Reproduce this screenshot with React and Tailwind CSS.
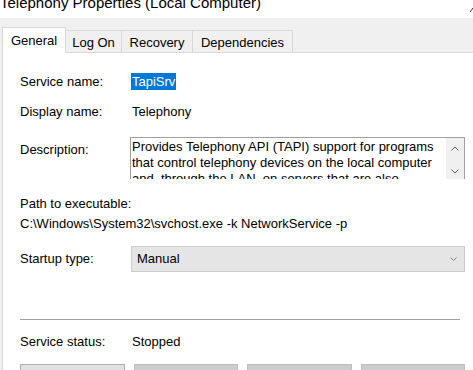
import React from "react";

export default function App() {
  const tabs = [
    { label: "General", w: "w-[64px]", sel: true },
    { label: "Log On", w: "w-[57px]" },
    { label: "Recovery", w: "w-[72px]" },
    { label: "Dependencies", w: "w-[101px]" },
  ];
  return (
    <div className="w-[473px] h-[370px] overflow-hidden bg-[#f0f0f0] flex flex-col font-['Liberation_Sans',Arial,sans-serif] text-[13px] text-black">
      {/* title bar */}
      <div className="h-[18px] bg-white overflow-hidden flex justify-between shrink-0">
        <div className="-mt-[5px] leading-[15px] text-[15px] whitespace-nowrap">
          Telephony Properties (Local Computer)
        </div>
        <svg width="4" height="14" viewBox="0 0 4 14" className="shrink-0">
          <line x1="1" y1="12" x2="4" y2="8" stroke="#333" strokeWidth="1" />
        </svg>
      </div>
      {/* tabs */}
      <div className="flex items-start pt-[9px] pl-[2px] shrink-0">
        {tabs.map((t) =>
          t.sel ? (
            <div
              key={t.label}
              className={`${t.w} h-[26px] relative z-10 bg-white border-l border-t border-r border-[#d9d9d9] flex justify-center pt-[5px] leading-[16px]`}
            >
              {t.label}
            </div>
          ) : (
            <div
              key={t.label}
              className={`${t.w} h-[22px] mt-[3px] -ml-[1px] border border-b-0 border-[#d9d9d9] flex justify-center pt-[4px] leading-[16px]`}
            >
              {t.label}
            </div>
          )
        )}
      </div>
      {/* panel */}
      <div className="-mt-[1px] ml-[2px] w-[480px] flex-1 bg-white border-l border-t border-[#d9d9d9] pl-[17px] pt-[20px] leading-[16px]">
        <div className="flex h-[17px] items-center">
          <div className="w-[112px]">Service name:</div>
          <span className="-ml-[1px] px-[1px] h-[17px] leading-[17px] bg-[#0078d7] text-white">TapiSrv</span>
        </div>
        <div className="flex mt-[14px] h-[16px]">
          <div className="w-[112px]">Display name:</div>
          <div>Telephony</div>
        </div>
        <div className="flex mt-[17px]">
          <div className="w-[112px] pt-[5px]">Description:</div>
          <div className="-ml-[2px] w-[335px] h-[42px] overflow-hidden border-l border-t border-r border-[#a0a0a0] flex">
            <div className="flex-1 pl-[1px] pt-[1px] leading-[16px] whitespace-nowrap overflow-hidden">
              <div>Provides Telephony API (TAPI) support for programs</div>
              <div>that control telephony devices on the local computer</div>
              <div>and, through the LAN, on servers that are also</div>
            </div>
            <div className="w-[18px] bg-[#f0f0f0] flex flex-col items-center shrink-0">
              <svg width="8" height="5" viewBox="0 0 8 5" className="mt-[8px]">
                <polyline points="0.5,4.5 4,1 7.5,4.5" fill="none" stroke="#606060" strokeWidth="1" />
              </svg>
              <svg width="8" height="5" viewBox="0 0 8 5" className="mt-[18px]">
                <polyline points="0.5,0.5 4,4 7.5,0.5" fill="none" stroke="#606060" strokeWidth="1" />
              </svg>
            </div>
          </div>
        </div>
        <div className="mt-[17px] h-[16px]">Path to executable:</div>
        <div className="mt-[4px] h-[16px]">C:\Windows\System32\svchost.exe -k NetworkService -p</div>
        <div className="flex items-center mt-[14px]">
          <div className="w-[112px]">Startup type:</div>
          <div className="-ml-[1px] w-[334px] h-[26px] bg-[#e5e5e5] border border-[#cccccc] flex items-center justify-between pl-[5px] pr-[7px]">
            <span>Manual</span>
            <svg width="7" height="4" viewBox="0 0 7 4">
              <polyline points="0.5,0.5 3.5,3.5 6.5,0.5" fill="none" stroke="#808080" strokeWidth="1" />
            </svg>
          </div>
        </div>
        <div className="mt-[47px] w-[440px] h-[1px] bg-[#a0a0a0]" />
        <div className="flex mt-[14px] h-[16px]">
          <div className="w-[112px]">Service status:</div>
          <div>Stopped</div>
        </div>
        <div className="mt-[14px] w-[445px] grid grid-cols-4 gap-[9px]">
          <div className="h-[23px] bg-[#e1e1e1] border border-[#adadad]" />
          <div className="h-[23px] bg-[#cccccc] border border-[#bfbfbf]" />
          <div className="h-[23px] bg-[#cccccc] border border-[#bfbfbf]" />
          <div className="h-[23px] bg-[#cccccc] border border-[#bfbfbf]" />
        </div>
      </div>
    </div>
  );
}
